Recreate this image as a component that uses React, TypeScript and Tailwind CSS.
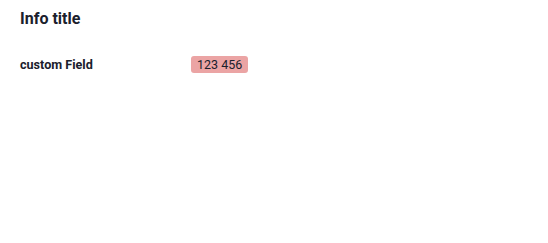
import React from "react";

const App: React.FC = () => {
  return (
    <div className="min-h-screen bg-white px-5 pt-[9px] text-[#1a202c] font-['Roboto',sans-serif]">
      <h2 className="text-[16px] font-bold leading-[20px]">Info title</h2>
      <div className="mt-[27px] flex items-center">
        <span className="w-[171px] text-[12.6px] font-bold leading-[17px]">custom Field</span>
        <span className="rounded-[3px] bg-[#eba4a4] px-[6px] text-[12.5px] leading-[17px]">123 456</span>
      </div>
    </div>
  );
};

export default App;
